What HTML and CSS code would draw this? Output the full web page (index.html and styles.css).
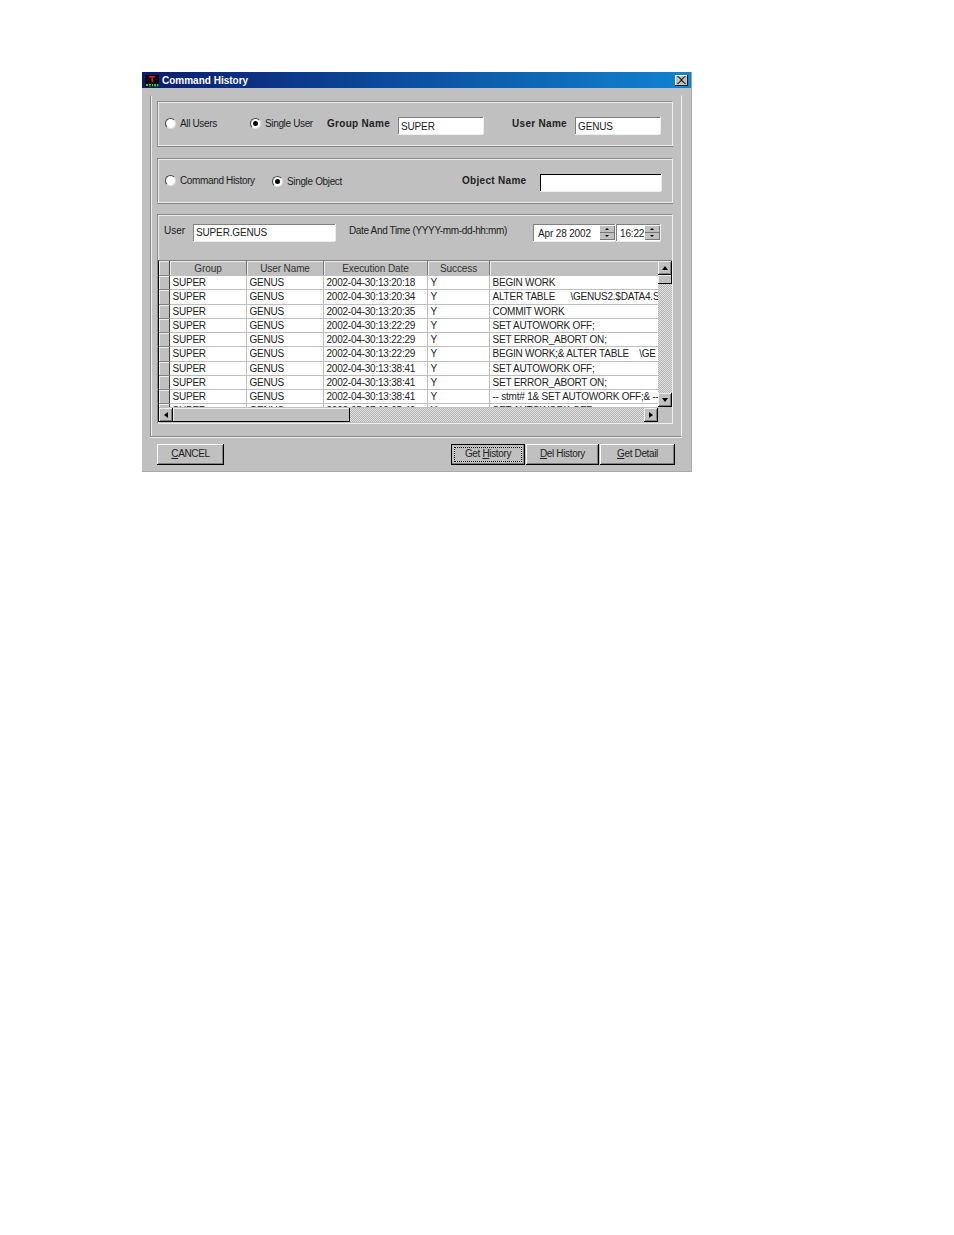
FILE: index.html
```html
<!doctype html>
<html lang="en">
<head>
    <meta charset="UTF-8">
    <title>Command History</title>
    <link rel="stylesheet" href="styles.css">
</head>
<body>
<div class="window">
    <div class="titlebar">
        <svg class="app-icon" width="16" height="16" viewBox="0 0 16 16">
            <rect x="1" y="3" width="14" height="12" fill="#0a0a0a"/>
            <path d="M5 4h6v1.500H9V10H7.500V5.500H5z" fill="#e01818"/>
            <path d="M2 12h2v2H2zM5 12h2v1H5zM5 13.500h2v1H5zM8 12h1v2.500H8zM10 12h2v2.500h-2zM13 12h1.500v2.500H13z" fill="#20d040"/>
        </svg>
        <span class="title">Command History</span>
        <span class="close">
            <svg width="9" height="8" viewBox="0 0 9 8"><path d="M1 0l3.500 3 3.500-3 1 0-4 4 4 4-1 0-3.500-3-3.500 3-1 0 4-4-4-4z" fill="#000"/></svg>
        </span>
    </div>

    <div class="panel">
        <div class="group">
            <label class="radio-item w-85"><i class="radio"></i>All Users</label>
            <label class="radio-item w-77"><i class="radio on"></i>Single User</label>
            <span class="field-label w-71">Group Name</span>
            <span class="edit w-85">SUPER</span>
            <span class="field-label user-name">User Name</span>
            <span class="edit w-85">GENUS</span>
        </div>

        <div class="group second">
            <label class="radio-item w-107"><i class="radio"></i>Command History</label>
            <label class="radio-item w-190 lower"><i class="radio on"></i>Single Object</label>
            <span class="field-label w-78">Object Name</span>
            <span class="edit dark w-121"></span>
        </div>

        <div class="group-list">
            <div class="filter-row">
                <span class="plain-label user-label">User</span>
                <span class="edit w-142">SUPER.GENUS</span>
                <span class="plain-label date-label">Date And Time (YYYY-mm-dd-hh:mm)</span>
                <span class="edit date">Apr 28 2002<span class="spin"><b></b><b class="down"></b></span></span>
                <span class="edit time">16:22<span class="spin"><b></b><b class="down"></b></span></span>
            </div>

            <div class="grid-frame">
                <div class="grid-main">
                    <div class="grid-clip">
                        <table class="grid">
                            <thead>
                                <tr><td class="sel"></td><td class="c1">Group</td><td class="c2">User Name</td><td class="c3">Execution Date</td><td class="c4">Success</td><td class="c5"></td></tr>
                            </thead>
                            <tbody>
                                <tr><td class="sel"></td><td>SUPER</td><td>GENUS</td><td>2002-04-30:13:20:18</td><td>Y</td><td>BEGIN WORK</td></tr>
                                <tr><td class="sel"></td><td>SUPER</td><td>GENUS</td><td>2002-04-30:13:20:34</td><td>Y</td><td>ALTER TABLE &nbsp; &nbsp; &nbsp;\GENUS2.$DATA4.S</td></tr>
                                <tr><td class="sel"></td><td>SUPER</td><td>GENUS</td><td>2002-04-30:13:20:35</td><td>Y</td><td>COMMIT WORK</td></tr>
                                <tr><td class="sel"></td><td>SUPER</td><td>GENUS</td><td>2002-04-30:13:22:29</td><td>Y</td><td>SET AUTOWORK OFF;</td></tr>
                                <tr><td class="sel"></td><td>SUPER</td><td>GENUS</td><td>2002-04-30:13:22:29</td><td>Y</td><td>SET ERROR_ABORT ON;</td></tr>
                                <tr><td class="sel"></td><td>SUPER</td><td>GENUS</td><td>2002-04-30:13:22:29</td><td>Y</td><td>BEGIN WORK;&amp; ALTER TABLE &nbsp; &nbsp;\GE</td></tr>
                                <tr><td class="sel"></td><td>SUPER</td><td>GENUS</td><td>2002-04-30:13:38:41</td><td>Y</td><td>SET AUTOWORK OFF;</td></tr>
                                <tr><td class="sel"></td><td>SUPER</td><td>GENUS</td><td>2002-04-30:13:38:41</td><td>Y</td><td>SET ERROR_ABORT ON;</td></tr>
                                <tr><td class="sel"></td><td>SUPER</td><td>GENUS</td><td>2002-04-30:13:38:41</td><td>Y</td><td>-- stmt# 1&amp; SET AUTOWORK OFF;&amp; -- :</td></tr>
                                <tr><td class="sel"></td><td>SUPER</td><td>GENUS</td><td>2002-05-07:10:05:40</td><td>Y</td><td>SET AUTOWORK OFF;</td></tr>
                            </tbody>
                        </table>
                    </div>
                    <div class="vscroll">
                        <span class="sb-btn"><i class="arrow up"></i></span>
                        <span class="v-thumb"></span>
                        <span class="track"></span>
                        <span class="sb-btn"><i class="arrow down"></i></span>
                    </div>
                </div>
                <div class="hscroll">
                    <span class="sb-btn"><i class="arrow left"></i></span>
                    <span class="h-thumb"></span>
                    <span class="track"></span>
                    <span class="sb-btn"><i class="arrow right"></i></span>
                    <span class="corner"></span>
                </div>
            </div>
        </div>
    </div>

    <div class="buttons">
        <button class="btn cancel"><u>C</u>ANCEL</button>
        <button class="btn default"><span class="focus">Get <u>H</u>istory</span></button>
        <button class="btn del"><u>D</u>el History</button>
        <button class="btn detail"><u>G</u>et Detail</button>
    </div>
</div>
</body>
</html>
```
FILE: styles.css
```css
* {
    padding: 0;
    margin: 0;
    box-sizing: border-box;
}
body {
    background: #fff;
    font-family: "Liberation Sans", Arial, sans-serif;
    font-size: 10px;
    letter-spacing: -.35px;
    color: #222;
    padding: 72px 0 0 142px;
}
.window {
    width: 550px;
    height: 400px;
    background: #c0c0c0;
    border-right: 1px solid #aaa;
    border-bottom: 1px solid #aaa;
    display: flex;
    flex-direction: column;
}

/* title bar */
.titlebar {
    height: 16px;
    display: flex;
    align-items: center;
    padding: 0 3px 0 2px;
    background: linear-gradient(to right, #0a1c70, #1084d0);
}
.app-icon {
    flex: none;
}
.title {
    margin-left: 2px;
    color: #fff;
    font-weight: bold;
    letter-spacing: 0;
    flex: 1;
}
.close {
    width: 13px;
    height: 11px;
    background: #c0c0c0;
    display: flex;
    align-items: center;
    justify-content: center;
    box-shadow: inset -1px -1px 0 #222, inset 1px 1px 0 #fff;
}

/* main panel */
.panel {
    margin: 7px 9px 0 8px;
    height: 342px;
    padding: 5px 8px 0 6px;
    border: 1px solid #8a8a8a;
    border-top-color: #c0c0c0;
    border-right-color: #eee;
    box-shadow: inset 1px 0 0 #eee, 0 1px 0 #eee;
}
.group {
    height: 45px;
    margin-bottom: 12px;
    padding: 0 0 0 7px;
    display: flex;
    align-items: center;
    border: 1px solid #8a8a8a;
    border-right-color: #eee;
    border-bottom-color: #eee;
    box-shadow: inset 1px 1px 0 #eee, 0 1px 0 #808080;
}
.group.second {
    margin-bottom: 11px;
}
.group .edit {
    margin-top: 4px;
    padding-top: 2px;
}
.radio-item {
    display: flex;
    align-items: center;
    gap: 4px;
}
.radio-item.lower {
    margin-top: 1px;
}
.radio {
    width: 11px;
    height: 11px;
    border-radius: 50%;
    background: #fff;
    border: 1px solid;
    border-color: #444 #ddd #ddd #444;
    display: flex;
    align-items: center;
    justify-content: center;
}
.radio.on::after {
    content: "";
    width: 5px;
    height: 5px;
    border-radius: 50%;
    background: #000;
}
.w-85 { width: 85px; }
.w-77 { width: 77px; }
.w-71 { width: 71px; }
.w-107 { width: 107px; }
.w-190 { width: 190px; }
.w-78 { width: 78px; }
.w-121 { width: 121px; }
.w-142 { width: 142px; }
.field-label {
    font-weight: bold;
    letter-spacing: .3px;
    margin-top: -1px;
}
.user-name {
    margin-left: 29px;
    width: 63px;
}
.edit {
    height: 17px;
    background: #fff;
    padding: 1px 0 0 2px;
    letter-spacing: -.15px;
    line-height: 13px;
    border-top: 1px solid #808080;
    border-left: 1px solid #808080;
    box-shadow: 0 1px 0 #eee, 1px 0 0 #eee;
    white-space: nowrap;
}
.edit.dark {
    border-color: #000;
}

/* list group */
.group-list {
    height: 210px;
    border-top: 1px solid #8a8a8a;
    border-left: 1px solid #8a8a8a;
    border-right: 1px solid #eee;
    border-bottom: 1px solid #eee;
    box-shadow: inset 1px 1px 0 #eee;
}
.filter-row {
    display: flex;
    align-items: flex-start;
    padding: 9px 0 0 6px;
    height: 45px;
}
.plain-label {
    line-height: 13px;
}
.user-label {
    width: 29px;
    letter-spacing: 0;
}
.date-label {
    margin-left: 14px;
    width: 184px;
}
.date,
.time {
    display: flex;
    justify-content: space-between;
    padding-top: 2px;
}
.date {
    width: 82px;
    padding-left: 4px;
}
.time {
    width: 44px;
    margin-left: 1px;
    padding-left: 3px;
}
.spin {
    width: 15px;
    display: flex;
    flex-direction: column;
    margin-top: -1px;
}
.spin b {
    height: 7px;
    background: #c0c0c0;
    box-shadow: inset -1px -1px 0 #777;
    position: relative;
}
.spin b::after {
    content: "";
    position: absolute;
    left: 5px;
    top: 2px;
    border: 2px solid transparent;
    border-top: 0;
    border-bottom: 2px solid #000;
}
.spin b.down::after {
    border-bottom: 0;
    border-top: 2px solid #000;
}

/* data grid */
.grid-frame {
    width: 514px;
    height: 162px;
    border-top: 1px solid #808080;
    border-left: 1px solid #000;
    box-shadow: inset 1px 0 0 #808080;
    display: flex;
    flex-direction: column;
}
.grid-main {
    height: 146px;
    display: flex;
}
.grid-clip {
    width: 499px;
    height: 146px;
    overflow: hidden;
    background: #fff;
}
.grid {
    table-layout: fixed;
    border-collapse: collapse;
    width: 499px;
    letter-spacing: -.22px;
}
.grid td {
    height: 14.250px;
    padding: 0 2px 0 3px;
    border-right: 1px solid #c0c0c0;
    border-bottom: 1px solid #c0c0c0;
    white-space: nowrap;
    overflow: hidden;
    line-height: 13px;
}
.grid td:last-child {
    border-right: 0;
}
.grid thead td {
    height: 14px;
    padding-top: 1px;
    background: #c0c0c0;
    text-align: center;
    letter-spacing: -.1px;
    border-right: 1px solid #777;
    box-shadow: inset 1px 1px 0 #eee;
    color: #333;
}
.grid .sel {
    width: 10px;
    background: #c0c0c0;
    border-right: 1px solid #444;
    border-bottom: 1px solid #808080;
    box-shadow: inset 1px 1px 0 #eee;
}
.c1, .c2 { width: 77px; }
.c3 { width: 104px; }
.c4 { width: 62px; }

/* scroll bars */
.vscroll {
    width: 14px;
    display: flex;
    flex-direction: column;
}
.hscroll {
    height: 15px;
    display: flex;
    border-top: 1px solid #c0c0c0;
}
.sb-btn {
    flex: none;
    width: 14px;
    height: 14px;
    background: #c0c0c0;
    box-shadow: inset -1px -1px 0 #000, inset 1px 1px 0 #eee, inset -2px -2px 0 #808080;
    display: flex;
    align-items: center;
    justify-content: center;
}
.v-thumb {
    flex: none;
    height: 9px;
    background: #c0c0c0;
    box-shadow: inset -1px -1px 0 #000, inset 1px 1px 0 #eee;
}
.h-thumb {
    flex: none;
    width: 177px;
    background: #c0c0c0;
    box-shadow: inset -1px -1px 0 #000, inset 1px 1px 0 #eee;
}
.track {
    flex: 1;
    background: repeating-conic-gradient(#b0b0b0 0 25%, #e4e4e4 0 50%) 0 0 / 2px 2px;
}
.corner {
    flex: none;
    width: 14px;
    background: #c0c0c0;
}
.arrow {
    width: 0;
    height: 0;
    border: 3px solid transparent;
}
.arrow.up { border-top: 0; border-bottom: 4px solid #000; }
.arrow.down { border-bottom: 0; border-top: 4px solid #000; }
.arrow.left { border-left: 0; border-right: 4px solid #000; }
.arrow.right { border-right: 0; border-left: 4px solid #000; }

/* bottom buttons */
.buttons {
    display: flex;
    padding: 7px 0 0 15px;
}
.btn {
    height: 21px;
    padding-bottom: 2px;
    background: #c0c0c0;
    border: 0;
    font-family: inherit;
    font-size: 10px;
    letter-spacing: -.35px;
    color: #222;
    box-shadow: inset -1px -1px 0 #000, inset 1px 1px 0 #fff, inset -2px -2px 0 #808080;
}
.cancel {
    width: 67px;
    margin-right: 227px;
}
.default {
    width: 74px;
    margin-right: 1px;
    outline: 1px solid #000;
    outline-offset: -1px;
    padding: 3px;
}
.focus {
    display: block;
    height: 100%;
    line-height: 12px;
    border: 1px dotted #000;
}
.del {
    width: 73px;
    margin-right: 1px;
}
.detail {
    width: 75px;
}
```
